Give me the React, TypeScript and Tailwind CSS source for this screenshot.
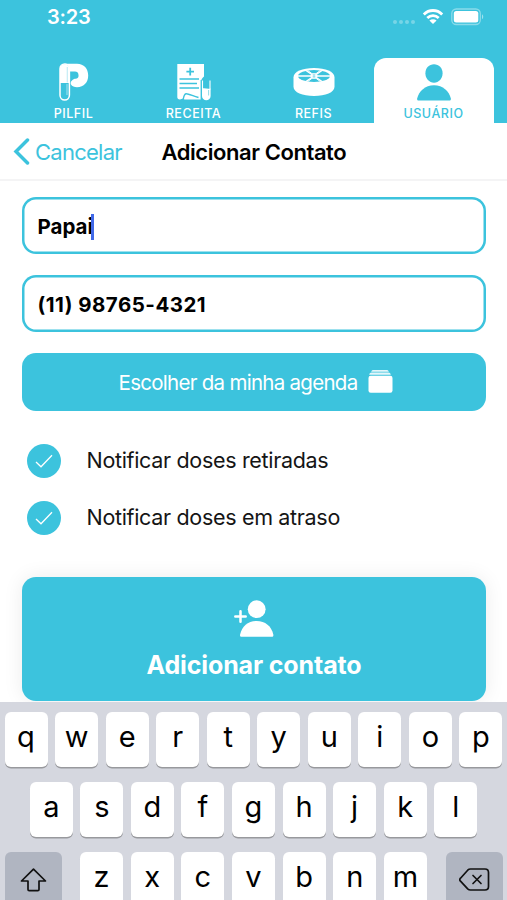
import React from 'react';
import { clsx } from 'clsx';

interface Tab {
  label: string;
  icon: React.ReactNode;
  active?: boolean;
}

const PilfilIcon = () => (
  <svg width="30" height="38" viewBox="0 0 30 38" fill="none">
    <path d="M6 .8H18C25 .8 29.200 5.800 29.200 12.500S25 24.200 18 24.200C15.500 24.200 13 23.500 12 21.500C11.300 20 11.800 18.500 13 17.500C14 16.300 15 15.800 17 15.800C19 15.500 19.800 13.800 19.500 12C19.300 9.500 18 8.600 16 8.600H10L6 5Z" fill="#fff" />
    <rect x="1" y="1" width="9.400" height="36" rx="4.700" fill="#3cc3dd" stroke="#fff" strokeWidth="1.500" />
    <path d="M1 20V6a4.700 4.700 0 0 1 9.400 0v14Z" fill="#fff" />
    <path d="M8.300 4v15.500" stroke="#c4edf5" strokeWidth="1.200" />
    <path d="M8 21v11" stroke="#8fdceb" strokeWidth="1.300" />
  </svg>
);

const ReceitaIcon = () => (
  <svg width="34" height="38" viewBox="0 0 34 38" fill="none">
    <path d="M.3 1H27V13.500C25 15 24 17 24 19V36.500H7.500L6 35.500L3 36.500C1 36.500.3 35.500.3 34Z" fill="#fff" />
    <path d="M6.300 36C6.800 33 7.500 31 9 30.700C11 30.400 15 32.500 21.500 34.500" stroke="#3cc3dd" strokeWidth="1.400" />
    <path d="M13.200 4.800v7.600M9.400 8.600h7.600" stroke="#3cc3dd" strokeWidth="1.800" />
    <path d="M2.500 16H22M2.500 20.500H20M2.500 25H22" stroke="#3cc3dd" strokeWidth="1.400" />
    <path d="M24.200 17v20" stroke="#3cc3dd" strokeWidth="1.200" />
    <path d="M25.500 17.500v9M33 17.500v9" stroke="#fff" strokeWidth="1.100" />
    <path d="M25 25.500c3-1 5.500 1 8.600 0v7.500a4.300 4.300 0 0 1-8.600 0Z" fill="#fff" />
    <path d="M31.600 27v5.500" stroke="#8fdceb" strokeWidth="1" />
  </svg>
);

const RefisIcon = () => (
  <svg width="42" height="30" viewBox="0 0 42 30" fill="none">
    <path d="M.5 10.500C.5 4.500 9.500 1 21 1s20.500 3.500 20.500 9.500v9C41.500 25.500 32.500 29 21 29S.5 25.500.5 19.500Z" fill="#fff" />
    <ellipse cx="21" cy="9" rx="16" ry="6" fill="#3cc3dd" />
    <path d="M5 9h32M13 3.500l16 11M29 3.500l-16 11" stroke="#fff" strokeWidth="1.500" />
    <ellipse cx="21" cy="9" rx="3.600" ry="1.500" fill="#fff" />
    <path d="M14.500 3.300L19 6.700h4l4.500-3.400M14.500 14.700L19 11.300h4l4.500 3.400" stroke="#fff" strokeWidth="1" />
    <ellipse cx="21" cy="9" rx="1.500" ry=".6" fill="#3cc3dd" />
  </svg>
);

const PersonIcon = () => (
  <svg width="34" height="37" viewBox="0 0 34 37" fill="#3cc3dd">
    <path d="M17 .3c4.900 0 8.600 3.800 8.600 9S21.800 18.700 17 18.700 8.400 14.600 8.400 9.300 12.100.3 17 .3Z" />
    <path d="M17 21.200c9 0 15 6 16.800 13.100.3 1.400-.3 2.200-1.500 2.200H1.700c-1.200 0-1.800-.8-1.500-2.200C2 27.200 8 21.200 17 21.200Z" />
  </svg>
);

const TABS: Tab[] = [
  { label: 'PILFIL', icon: <PilfilIcon /> },
  { label: 'RECEITA', icon: <ReceitaIcon /> },
  { label: 'REFIS', icon: <div className="pb-1"><RefisIcon /></div> },
  { label: 'USUÁRIO', icon: <PersonIcon />, active: true },
];

const StatusBar = () => (
  <div className="flex h-[58px] items-start justify-between pl-[47px] pr-[22px] text-white">
    <span className="mt-[3px] text-[20px] leading-7 font-semibold tracking-[-0.2px]">3:23</span>
    <div className="mt-2 flex items-center">
      <svg width="24" height="18" viewBox="0 0 24 18" fill="#fff" opacity=".3">
        <circle cx="3" cy="14" r="2" />
        <circle cx="9" cy="14" r="2" />
        <circle cx="15" cy="14" r="2" />
        <circle cx="21" cy="14" r="2" />
      </svg>
      <svg className="ml-1.5" width="22" height="18" viewBox="0 0 22 18" fill="none">
        <path d="M1.800 6.400C7 1.200 15 1.200 20.200 6.400M5.300 10c3.300-3.200 8.100-3.200 11.400 0" stroke="#fff" strokeWidth="2.800" />
        <path d="M7.400 12.400c2.200-1.700 5-1.700 7.200 0L11 16Z" fill="#fff" />
      </svg>
      <svg className="ml-[7px]" width="34" height="18" viewBox="0 0 34 18" fill="none">
        <rect x=".8" y="1" width="28.500" height="15.500" rx="4.500" stroke="#fff" strokeOpacity=".4" strokeWidth="1.300" />
        <rect x="2.800" y="3" width="24.500" height="11.500" rx="2.500" fill="#fff" />
        <path d="M31 6.300c1.600.7 1.600 4.200 0 4.900Z" fill="#fff" fillOpacity=".5" />
      </svg>
    </div>
  </div>
);

const Header = () => (
  <header className="h-[123px] bg-[#3cc3dd]">
    <StatusBar />
    <nav className="flex px-[13.500px]">
      {TABS.map(tab => (
        <div
          key={tab.label}
          className={clsx(
            'flex h-[65px] w-[120px] flex-col items-center justify-end pb-[1.500px]',
            tab.active ? 'rounded-t-xl bg-white text-[#3cc3dd]' : 'text-white'
          )}
        >
          {tab.icon}
          <span className="mt-[5px] text-[12.500px] leading-4 font-medium tracking-[0.550px]">{tab.label}</span>
        </div>
      ))}
    </nav>
  </header>
);

const Option = ({ label }: { label: string }) => (
  <label className="flex h-[57px] items-center pl-[5px]">
    <span className="flex size-[34px] items-center justify-center rounded-full bg-[#3cc3dd]">
      <svg width="18" height="14" viewBox="0 0 18 14" fill="none">
        <path d="M1 8l5 4.800L17 1.200" stroke="#fff" strokeWidth="1.300" />
      </svg>
    </span>
    <span className="ml-[26px] text-[21.500px] tracking-[-0.320px] text-[#151515]">{label}</span>
  </label>
);

const Key = ({ char }: { char: string }) => (
  <div className="flex h-[55px] w-[43px] shrink-0 justify-center rounded-[6px] bg-white pt-[4px] text-[29px] leading-[42px] font-normal text-black shadow-[0_1.500px_0_#98999d]">
    {char}
  </div>
);

const Keyboard = () => (
  <div className="flex h-[198px] flex-col gap-[15px] overflow-hidden bg-[#d5d7df] px-[4.500px] pt-[10px]">
    <div className="flex justify-between">
      {'qwertyuiop'.split('').map(c => <Key key={c} char={c} />)}
    </div>
    <div className="flex justify-between px-[25.300px]">
      {'asdfghjkl'.split('').map(c => <Key key={c} char={c} />)}
    </div>
    <div className="flex justify-between">
      <div className="flex h-[55px] w-[57px] justify-center rounded-[6px] bg-[#b0b5c1] pt-4">
        <svg width="27" height="24" viewBox="0 0 27 24" fill="none" stroke="#111" strokeWidth="1.700" strokeLinejoin="round">
          <path d="M13.500 1.200L25.500 13H19v8.500c0 .8-.4 1.200-1.200 1.200H9.200c-.8 0-1.200-.4-1.200-1.200V13H1.500Z" />
        </svg>
      </div>
      <div className="flex w-[347px] justify-between">
        {'zxcvbnm'.split('').map(c => <Key key={c} char={c} />)}
      </div>
      <div className="flex h-[55px] w-[57px] justify-center rounded-[6px] bg-[#b0b5c1] pt-4">
        <svg width="31" height="23" viewBox="0 0 31 23" fill="none" stroke="#111" strokeWidth="1.700" strokeLinejoin="round" strokeLinecap="round">
          <path d="M11.500 1H26c2.300 0 3.500 1.200 3.500 3.500v14c0 2.300-1.200 3.500-3.500 3.500H11.500c-1.200 0-2-.4-2.800-1.200L1.500 13.200c-1-1-1-2 0-3L8.700 2.200C9.500 1.400 10.300 1 11.500 1Z" />
          <path d="M14 7.500l8 8M22 7.500l-8 8" />
        </svg>
      </div>
    </div>
  </div>
);

export default function App() {
  return (
    <div className="flex h-[900px] w-[507px] flex-col overflow-hidden bg-white font-['Inter','Liberation_Sans',sans-serif]">
      <Header />

      <div className="flex h-[58px] items-center border-b-2 border-[#f4f4f5] pl-[13px]">
        <svg width="17" height="27" viewBox="0 0 17 27" fill="none">
          <path d="M14.500 2L3 13.500L14.500 25" stroke="#3cc3dd" strokeWidth="3.500" strokeLinecap="round" />
        </svg>
        <span className="ml-[5px] w-[126.500px] pt-0.5 text-[22px] tracking-[-0.750px] text-[#3cc3dd]">Cancelar</span>
        <h1 className="pt-0.5 text-[22px] font-semibold tracking-[-0.430px] whitespace-nowrap text-black">Adicionar Contato</h1>
      </div>

      <main className="flex h-[521px] shrink-0 flex-col px-[21.500px] pt-4">
        <div className="flex h-[57px] items-center rounded-[14px] pt-[2px] pl-4 text-[20.500px] font-bold text-black shadow-[inset_0_0_0_2.500px_#3cc3dd]">
          <span className="pt-px">Papai</span>
          <span className="-ml-[2px] h-[26px] w-[2.500px] bg-[#4169e8]" />
        </div>
        <div className="mt-[21px] flex h-[57px] items-center rounded-[14px] pt-[3px] pl-4 text-[20.500px] font-bold text-black shadow-[inset_0_0_0_2.500px_#3cc3dd]">
          <span className="tracking-[0.480px]">(11) 98765-4321</span>
        </div>
        <button className="mt-[21px] flex h-[58px] items-center justify-center rounded-[14px] bg-[#3cc3dd] pl-[5px] text-[20.500px] text-white">
          <span className="pt-0.5 tracking-[-0.720px]">Escolher da minha agenda</span>
          <svg className="mb-px ml-[11px]" width="25" height="23" viewBox="0 0 25 23" fill="#fff">
            <path d="M5.500 0h13c1.200 0 2 .7 2.300 1.700H3.200C3.500.7 4.300 0 5.500 0Z" opacity=".85" />
            <path d="M3.500 2.500h17c1.200 0 2 .7 2.300 2.200H1.200c.3-1.500 1.100-2.200 2.300-2.200Z" opacity=".85" />
            <rect x=".5" y="5.700" width="24" height="17" rx="2.200" />
          </svg>
        </button>

        <div className="mt-[21px]">
          <Option label="Notificar doses retiradas" />
          <Option label="Notificar doses em atraso" />
        </div>

        <button className="mt-[31px] flex h-[124px] shrink-0 flex-col items-center rounded-[14px] bg-[#3cc3dd] pt-[23px] text-white shadow-[0_0_20px_rgba(0,0,0,0.08)]">
          <svg width="40" height="37" viewBox="0 0 40 37" fill="#fff">
            <circle cx="22.700" cy="9.200" r="8.900" />
            <path d="M22.700 21c8.500 0 14.800 5.300 16.600 13.500.3 1.500-.3 2.300-1.600 2.300h-30c-1.300 0-1.900-.8-1.600-2.300C7.900 26.300 14.200 21 22.700 21Z" />
            <path d="M6.500 11.300v10.400M1.300 16.500h10.400" stroke="#fff" strokeWidth="2.500" strokeLinecap="round" />
          </svg>
          <span className="mt-[10px] pl-px text-[25px] leading-[36px] font-bold tracking-[-0.130px]">Adicionar contato</span>
        </button>
      </main>

      <Keyboard />
    </div>
  );
}
